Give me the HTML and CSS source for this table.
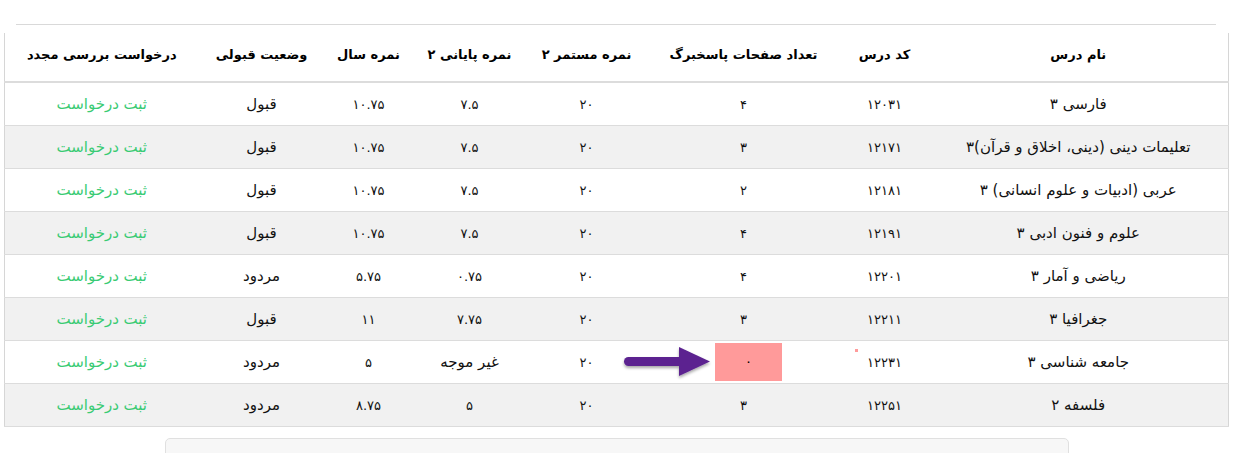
FILE: index.html
```html
<!DOCTYPE html>
<html lang="fa">
<head>
<meta charset="utf-8">
<title>کارنامه</title>
<link rel="stylesheet" href="styles.css">
</head>
<body>
<div class="page">
  <hr class="top-rule">
  <table class="grades" dir="rtl">
    <colgroup>
      <col class="c-name"><col class="c-code"><col class="c-pages"><col class="c-cont">
      <col class="c-final"><col class="c-year"><col class="c-status"><col class="c-req">
    </colgroup>
    <thead>
      <tr>
        <th>نام درس</th><th>کد درس</th><th>تعداد صفحات پاسخبرگ</th><th>نمره مستمر ۲</th>
        <th>نمره پایانی ۲</th><th>نمره سال</th><th>وضعیت قبولی</th><th>درخواست بررسی مجدد</th>
      </tr>
    </thead>
    <tbody>
      <tr><td class="txt">فارسی ۳</td><td>۱۲۰۳۱</td><td>۴</td><td>۲۰</td><td>۷.۵</td><td>۱۰.۷۵</td><td class="txt">قبول</td><td class="txt"><a class="req" href="#">ثبت درخواست</a></td></tr>
      <tr><td class="txt">تعلیمات دینی (دینی، اخلاق و قرآن)۳</td><td>۱۲۱۷۱</td><td>۳</td><td>۲۰</td><td>۷.۵</td><td>۱۰.۷۵</td><td class="txt">قبول</td><td class="txt"><a class="req" href="#">ثبت درخواست</a></td></tr>
      <tr><td class="txt">عربی (ادبیات و علوم انسانی) ۳</td><td>۱۲۱۸۱</td><td>۲</td><td>۲۰</td><td>۷.۵</td><td>۱۰.۷۵</td><td class="txt">قبول</td><td class="txt"><a class="req" href="#">ثبت درخواست</a></td></tr>
      <tr><td class="txt">علوم و فنون ادبی ۳</td><td>۱۲۱۹۱</td><td>۴</td><td>۲۰</td><td>۷.۵</td><td>۱۰.۷۵</td><td class="txt">قبول</td><td class="txt"><a class="req" href="#">ثبت درخواست</a></td></tr>
      <tr><td class="txt">ریاضی و آمار ۳</td><td>۱۲۲۰۱</td><td>۴</td><td>۲۰</td><td>۰.۷۵</td><td>۵.۷۵</td><td class="txt">مردود</td><td class="txt"><a class="req" href="#">ثبت درخواست</a></td></tr>
      <tr><td class="txt">جغرافیا ۳</td><td>۱۲۲۱۱</td><td>۳</td><td>۲۰</td><td>۷.۷۵</td><td>۱۱</td><td class="txt">قبول</td><td class="txt"><a class="req" href="#">ثبت درخواست</a></td></tr>
      <tr><td class="txt">جامعه شناسی ۳</td><td class="code-cell">۱۲۲۳۱<span class="dot"></span></td><td><span class="hl">۰<svg class="arrow" width="92" height="36" viewBox="0 0 92 36"><defs><filter id="sh" x="-20%" y="-30%" width="140%" height="170%"><feDropShadow dx="0" dy="2" stdDeviation="1.6" flood-color="#000" flood-opacity="0.35"/></filter></defs><g filter="url(#sh)" fill="#5b2490"><rect x="3" y="13" width="60" height="9" rx="4.5"/><polygon points="58,3 89,17.5 58,32"/></g></svg></span></td><td>۲۰</td><td class="txt">غیر موجه</td><td>۵</td><td class="txt">مردود</td><td class="txt"><a class="req" href="#">ثبت درخواست</a></td></tr>
      <tr><td class="txt">فلسفه ۲</td><td>۱۲۲۵۱</td><td>۳</td><td>۲۰</td><td>۵</td><td>۸.۷۵</td><td class="txt">مردود</td><td class="txt"><a class="req" href="#">ثبت درخواست</a></td></tr>
    </tbody>
  </table>
  <div class="footer-box"></div>
</div>
</body>
</html>
```
FILE: styles.css
```css
html, body {
  margin: 0;
  padding: 0;
  background: #fff;
}
body {
  font-family: "DejaVu Sans", "Noto Sans", sans-serif;
  color: #212529;
}
.page {
  padding-top: 24px;
}
.top-rule {
  margin: 0 37px 0 16px;
  border: 0;
  border-top: 1px solid #d9d9d9;
  height: 0;
}
.grades {
  margin: 8px 0 0 4px;
  width: 1225px;
  table-layout: fixed;
  border-collapse: collapse;
  border-left: 1px solid #d6d6d6;
  border-right: 1px solid #d6d6d6;
  font-size: 13px;
}
.c-name { width: 300px; }
.c-code { width: 88px; }
.c-pages { width: 194px; }
.c-cont { width: 120px; }
.c-final { width: 114px; }
.c-year { width: 88px; }
.c-status { width: 126px; }
.c-req { width: 194px; }
.grades th {
  height: 42px;
  font-weight: bold;
  font-size: 13px;
  color: #000;
  text-align: center;
  vertical-align: middle;
  padding: 0 0 6px;
  border-bottom: 2px solid #dcdcdc;
}
.grades td {
  height: 42px;
  padding: 0;
  text-align: center;
  vertical-align: middle;
  border-bottom: 1px solid #dcdcdc;
  color: #111;
  font-size: 13px;
}
.grades td.txt {
  font-size: 15px;
}
.grades tbody tr:nth-child(even) td {
  background: #f1f1f1;
}
.req {
  color: #3acb74;
  text-decoration: none;
}
.code-cell {
  position: relative;
}
.dot {
  position: absolute;
  left: 14px;
  top: 8px;
  width: 3px;
  height: 3px;
  background: #ff9b9b;
}
.hl {
  position: relative;
  display: inline-block;
  width: 67px;
  height: 38px;
  line-height: 38px;
  background: #ff9a9a;
  color: #000;
  vertical-align: middle;
  margin-left: 10px;
}
.arrow {
  position: absolute;
  right: 69px;
  top: 1px;
}
.footer-box {
  margin: 11px 0 0 165px;
  width: 902px;
  height: 30px;
  background: #f7f7f7;
  border: 1px solid #e0e0e0;
  border-radius: 5px;
}
```
